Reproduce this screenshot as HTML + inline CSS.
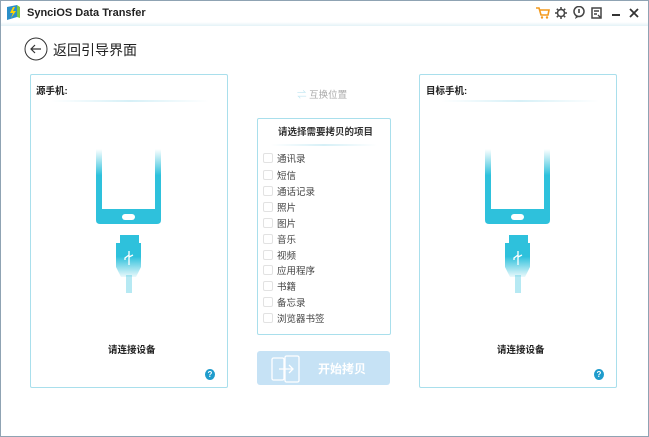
<!DOCTYPE html>
<html><head><meta charset="utf-8"><style>
*{margin:0;padding:0;box-sizing:border-box}
body{width:649px;height:437px;overflow:hidden;background:#fff;font-family:"Liberation Sans","Noto Sans CJK SC",sans-serif;position:relative}
.win{position:absolute;left:0;top:0;width:649px;height:437px;border:1px solid #8fa3b3;}
.title{position:absolute;left:0;top:0;width:647px;height:25px;background:linear-gradient(#fff 0,#fff 21px,#e3f2f7 25px);}
.title .t{position:absolute;left:26px;top:6px;font-size:11px;font-weight:bold;color:#222}
.panel{position:absolute;border:1px solid #a9dfec;background:#fff;border-radius:2px}
.lbl{position:absolute;font-size:9.5px;font-weight:bold;color:#222}
.sep{position:absolute;height:2px;background:linear-gradient(90deg,rgba(200,235,245,0),#d6f0f7,rgba(200,235,245,0))}
.item{position:absolute;left:262px;font-size:9.5px;color:#444;height:12px;line-height:12px}
.item i{display:inline-block;width:10px;height:10px;border:1px solid #e2e2e2;border-radius:2px;vertical-align:-1px;margin-right:4px}
.help{position:absolute;width:10px;height:11px;border-radius:50%;background:#1f9ccc;color:#fff;font-size:8px;font-weight:bold;text-align:center;line-height:11px}
.conn{position:absolute;font-size:9.5px;font-weight:bold;color:#222}
</style></head><body>
<div class="win">
<div class="title">
<svg style="position:absolute;left:5px;top:3px" width="15" height="17" viewBox="0 0 15 17"><path d="M1 3 L11 1 L11 13 L1 16Z" fill="#2a8fc9"/><path d="M11 1 L14 3 L14 14 L11 13Z" fill="#7ac943"/><path d="M7 3 L4 9 L7 9 L5 14 L10 7 L7 7 L9 3Z" fill="#ffd400"/></svg>
<div class="t">SynciOS Data Transfer</div>
<svg style="position:absolute;left:535px;top:6px" width="14" height="12" viewBox="0 0 14 12"><path d="M0 1 H3 L5 8 H12 L13 3 H4" fill="none" stroke="#f39a1e" stroke-width="1.6"/><circle cx="6" cy="10.5" r="1.2" fill="#f39a1e"/><circle cx="11" cy="10.5" r="1.2" fill="#f39a1e"/></svg>
<svg style="position:absolute;left:554px;top:6px" width="12" height="12" viewBox="0 0 12 12"><circle cx="6" cy="6" r="3.5" fill="none" stroke="#444" stroke-width="1.5"/><path d="M6 0V2M6 10V12M0 6H2M10 6H12M1.8 1.8L3.2 3.2M8.8 8.8L10.2 10.2M1.8 10.2L3.2 8.8M8.8 3.2L10.2 1.8" stroke="#444" stroke-width="1.5"/></svg>
<svg style="position:absolute;left:572px;top:5px" width="12" height="13" viewBox="0 0 12 13"><circle cx="6" cy="5.5" r="5" fill="none" stroke="#444" stroke-width="1.5"/><path d="M3 10 L2 13 L6 10.5" fill="#444"/><rect x="5.2" y="3" width="1.6" height="4" fill="#444"/></svg>
<svg style="position:absolute;left:590px;top:6px" width="12" height="12" viewBox="0 0 12 12"><rect x="1" y="1" width="9" height="10" fill="none" stroke="#444" stroke-width="1.5"/><path d="M3 4H8M3 7H6M7 8L10 11" stroke="#444" stroke-width="1.4"/></svg>
<div style="position:absolute;left:611px;top:13px;width:8px;height:2px;background:#333"></div>
<svg style="position:absolute;left:628px;top:7px" width="10" height="10" viewBox="0 0 10 10"><path d="M1 1L9 9M9 1L1 9" stroke="#333" stroke-width="1.8"/></svg>
</div>
<svg style="position:absolute;left:23px;top:36px" width="24" height="24" viewBox="0 0 24 24"><circle cx="12" cy="12" r="11" fill="#fff" stroke="#333" stroke-width="1"/><path d="M17 12H7M11 8L7 12L11 16" fill="none" stroke="#333" stroke-width="1.2"/></svg>
<div style="position:absolute;left:52px;top:39px;font-size:14px;color:#222">返回引导界面</div>

<div class="panel" style="left:29px;top:73px;width:198px;height:314px"></div>
<div class="lbl" style="left:35px;top:82px">源手机:</div>
<div class="sep" style="left:50px;top:99px;width:158px"></div>
<div class="panel" style="left:418px;top:73px;width:198px;height:314px"></div>
<div class="lbl" style="left:425px;top:82px">目标手机:</div>
<div class="sep" style="left:440px;top:99px;width:158px"></div>

<svg style="position:absolute;left:95px;top:148px" width="65" height="145" viewBox="0 0 65 145">
<defs><linearGradient id="g" x1="0" y1="0" x2="0" y2="1"><stop offset="0" stop-color="#2ec1dc" stop-opacity="0"/><stop offset="0.35" stop-color="#2ec1dc"/></linearGradient>
<linearGradient id="c" x1="0" y1="0" x2="0" y2="1"><stop offset="0.4" stop-color="#2ec1dc"/><stop offset="1" stop-color="#2ec1dc" stop-opacity="0.1"/></linearGradient></defs>
<path d="M0 0H65V71Q65 75 61 75H4Q0 75 0 71Z" fill="url(#g)"/><rect x="6" y="0" width="53" height="60" fill="#fff"/>
<rect x="26" y="65" width="13" height="6" rx="3" fill="#fff"/>
<rect x="24" y="86" width="19" height="9" fill="#2ec1dc"/>
<path d="M20 94H45V118L40 128H25L20 118Z" fill="url(#c)"/>
<rect x="30" y="126" width="6" height="18" fill="#2ec1dc" opacity="0.35"/>
<path d="M33 102V116M33 106L29 109V111M33 108L37 106" stroke="#fff" stroke-width="1.3" fill="none"/>
</svg>
<svg style="position:absolute;left:484px;top:148px" width="65" height="145" viewBox="0 0 65 145">
<path d="M0 0H65V71Q65 75 61 75H4Q0 75 0 71Z" fill="url(#g)"/><rect x="6" y="0" width="53" height="60" fill="#fff"/>
<rect x="26" y="65" width="13" height="6" rx="3" fill="#fff"/>
<rect x="24" y="86" width="19" height="9" fill="#2ec1dc"/>
<path d="M20 94H45V118L40 128H25L20 118Z" fill="url(#c)"/>
<rect x="30" y="126" width="6" height="18" fill="#2ec1dc" opacity="0.35"/>
<path d="M33 102V116M33 106L29 109V111M33 108L37 106" stroke="#fff" stroke-width="1.3" fill="none"/>
</svg>
<div class="conn" style="left:107px;top:341px">请连接设备</div>
<div class="conn" style="left:496px;top:341px">请连接设备</div>
<div class="help" style="left:204px;top:368px">?</div>
<div class="help" style="left:593px;top:368px">?</div>

<div style="position:absolute;left:296px;top:86px;font-size:9.5px;color:#aaa"><span style="color:#bfe6f2">⇌</span> 互换位置</div>
<div class="panel" style="left:256px;top:117px;width:134px;height:217px"></div>
<div class="lbl" style="left:277px;top:123px;color:#333">请选择需要拷贝的项目</div>
<div class="sep" style="left:270px;top:143px;width:106px"></div>
<div class="item" style="top:152px"><i></i>通讯录</div>
<div class="item" style="top:169px"><i></i>短信</div>
<div class="item" style="top:185px"><i></i>通话记录</div>
<div class="item" style="top:201px"><i></i>照片</div>
<div class="item" style="top:217px"><i></i>图片</div>
<div class="item" style="top:233px"><i></i>音乐</div>
<div class="item" style="top:249px"><i></i>视频</div>
<div class="item" style="top:264px"><i></i>应用程序</div>
<div class="item" style="top:280px"><i></i>书籍</div>
<div class="item" style="top:296px"><i></i>备忘录</div>
<div class="item" style="top:312px"><i></i>浏览器书签</div>

<div style="position:absolute;left:256px;top:350px;width:133px;height:34px;background:#c6e2f5;border-radius:3px"></div>
<svg style="position:absolute;left:270px;top:354px" width="32" height="28" viewBox="0 0 32 28"><rect x="1" y="3" width="12" height="22" rx="1.5" fill="none" stroke="#fff" stroke-width="1.3"/><rect x="14" y="1" width="14" height="26" rx="1.5" fill="#c6e2f5" stroke="#fff" stroke-width="1.3"/><path d="M8 14H22M18 10L22 14L18 18" fill="none" stroke="#fff" stroke-width="1.3"/></svg>
<div style="position:absolute;left:317px;top:359px;font-size:12px;font-weight:bold;color:#fff">开始拷贝</div>
</div>
</body></html>
